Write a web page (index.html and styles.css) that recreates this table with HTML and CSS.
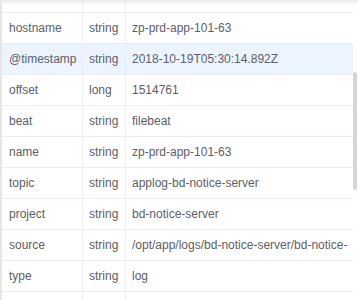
FILE: index.html
```html
<!DOCTYPE html>
<html lang="en">
<head>
    <meta charset="UTF-8">
    <title>Document fields</title>
    <link rel="stylesheet" href="styles.css">
</head>
<body>
    <div class="panel">
        <div class="campos">
            <div class="fila parcial"><div></div><div></div><div></div></div>
            <div class="fila"><div>hostname</div><div>string</div><div>zp-prd-app-101-63</div></div>
            <div class="fila activa"><div>@timestamp</div><div>string</div><div>2018-10-19T05:30:14.892Z</div></div>
            <div class="fila"><div>offset</div><div>long</div><div>1514761</div></div>
            <div class="fila"><div>beat</div><div>string</div><div>filebeat</div></div>
            <div class="fila"><div>name</div><div>string</div><div>zp-prd-app-101-63</div></div>
            <div class="fila"><div>topic</div><div>string</div><div>applog-bd-notice-server</div></div>
            <div class="fila"><div>project</div><div>string</div><div>bd-notice-server</div></div>
            <div class="fila"><div>source</div><div>string</div><div>/opt/app/logs/bd-notice-server/bd-notice-</div></div>
            <div class="fila"><div>type</div><div>string</div><div>log</div></div>
            <div class="fila"><div></div><div></div><div></div></div>
        </div>
        <div class="barra"></div>
    </div>
</body>
</html>
```

FILE: styles.css
```css
* {
    margin: 0;
    padding: 0;
    box-sizing: border-box;
}

body {
    background: #fff;
    font-family: "Liberation Sans", Arial, sans-serif;
    font-size: 12px;
    color: #5c6068;
}

.panel {
    position: relative;
    height: 300px;
    overflow: hidden;
    border-left: 2px solid #e6e6e6;
    padding-right: 5px;
}

/* sombra superior del area con scroll */
.panel::before {
    content: "";
    position: absolute;
    top: 0;
    left: 0;
    right: 0;
    height: 5px;
    background: linear-gradient(rgba(0, 0, 0, 0.09), rgba(0, 0, 0, 0));
    z-index: 3;
}

.fila {
    display: grid;
    grid-template-columns: 81px 43px 1fr;
    height: 31px;
    border-bottom: 1px solid #ebeef5;
}

.fila div {
    display: flex;
    align-items: center;
    padding: 0 6px;
    border-right: 1px solid #ebeef5;
    white-space: nowrap;
    overflow: hidden;
}

.fila div:first-child {
    padding-left: 7px;
}

.fila div:last-child {
    border-right: none;
}

.parcial {
    height: 13px;
}

.activa {
    background: #ecf5ff;
}

.barra {
    position: absolute;
    top: 72px;
    right: 1px;
    width: 4px;
    height: 118px;
    background: #d6d6d6;
    border-radius: 2px;
}
```
